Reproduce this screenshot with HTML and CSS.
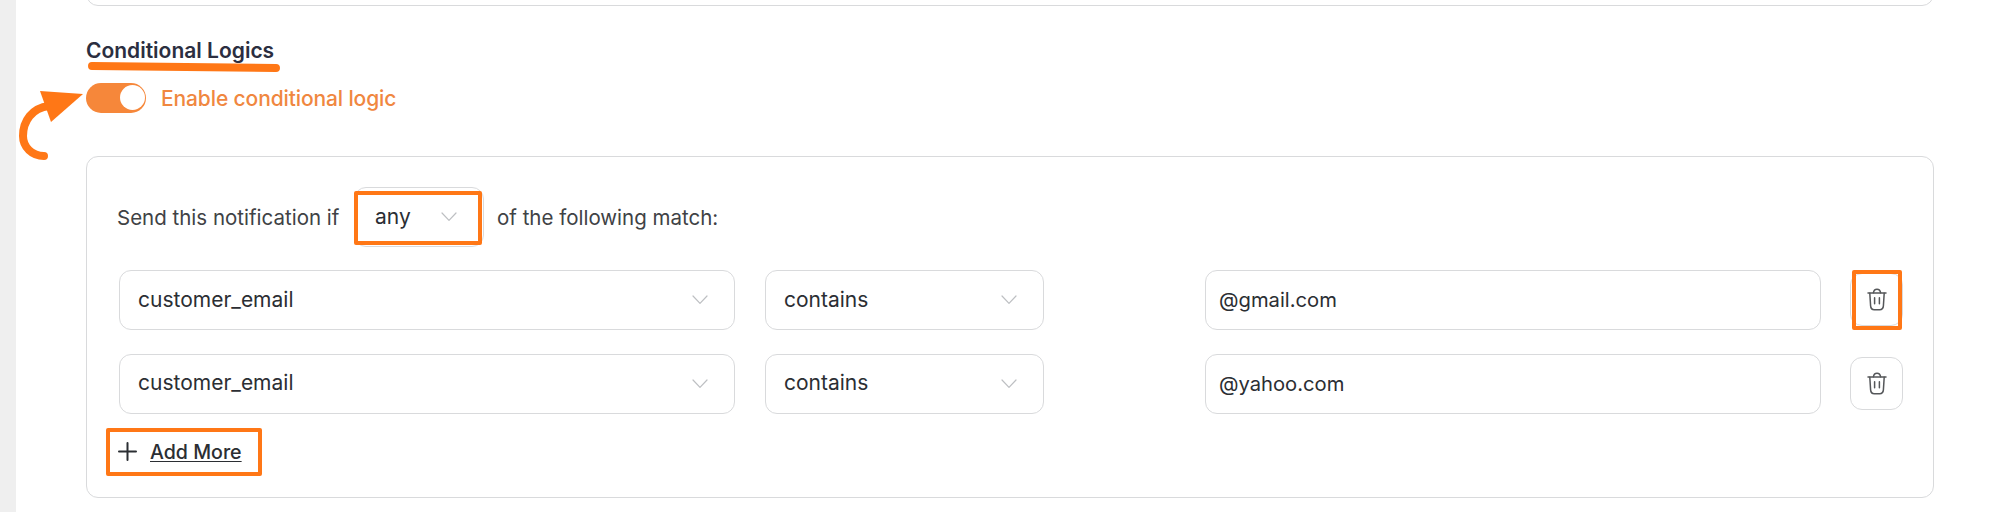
FILE: index.html
```html
<!DOCTYPE html>
<html lang="en">
<head>
<meta charset="utf-8">
<title>Conditional Logics</title>
<link rel="stylesheet" href="styles.css">
</head>
<body>
<svg class="sprite" width="0" height="0" aria-hidden="true">
  <symbol id="chevron" viewBox="0 0 16 10"><path d="M1 1l7 7.3L15 1" fill="none" stroke="currentColor" stroke-width="1.2" stroke-linecap="round" stroke-linejoin="round"/></symbol>
  <symbol id="trash" viewBox="0 0 20 23"><g fill="none" stroke="currentColor" stroke-width="1.5" stroke-linecap="round" stroke-linejoin="round"><path d="M1 5h18"/><path d="M6.4 4.8C6.7 2.4 8 1.2 10 1.2s3.300 1.200 3.600 3.600"/><path d="M2.800 5.200l.8 12.700c.2 2.700 1.200 3.800 3.700 3.800h5.400c2.500 0 3.500-1.100 3.700-3.800l.8-12.700"/><path d="M7.600 9.700v6M12.400 9.700v6"/></g></symbol>
</svg>
<div class="page">
  <aside class="rail"></aside>
  <main class="content">
    <div class="previous-panel"></div>
    <h2 class="title">Conditional Logics
      <svg class="title-mark" width="192" height="12" viewBox="0 0 192 12"><path d="M4 4L188 6" stroke="#ff7716" stroke-width="8" stroke-linecap="round"/></svg>
    </h2>
    <div class="toggle-row">
      <span class="toggle"><span class="knob"></span></span>
      <span class="toggle-label">Enable conditional logic</span>
      <svg class="arrow" width="66" height="72" viewBox="0 0 66 72"><path d="M31 17C14 19 5 32 5 47c0 11 9 20 21 20" fill="none" stroke="#ff7716" stroke-width="8" stroke-linecap="round"/><path d="M22 2l43 3-32 28z" fill="#ff7716"/></svg>
    </div>
    <section class="panel">
      <div class="sentence">
        <span class="before">Send this notification if</span>
        <div class="select any"><span class="any-text">any</span><svg class="chevron"><use href="#chevron"/></svg><i class="mark mark-any"></i></div>
        <span class="after">of the following match:</span>
      </div>
      <div class="rule">
        <div class="select"><span class="field-name">customer_email</span><svg class="chevron"><use href="#chevron"/></svg></div>
        <div class="select"><span class="operator">contains</span><svg class="chevron"><use href="#chevron"/></svg></div>
        <div class="input"><span>@gmail.com</span></div>
        <div class="delete"><svg class="trash"><use href="#trash"/></svg><i class="mark mark-delete"></i></div>
      </div>
      <div class="rule second">
        <div class="select"><span class="field-name">customer_email</span><svg class="chevron"><use href="#chevron"/></svg></div>
        <div class="select"><span class="operator">contains</span><svg class="chevron"><use href="#chevron"/></svg></div>
        <div class="input"><span>@yahoo.com</span></div>
        <div class="delete"><svg class="trash"><use href="#trash"/></svg></div>
      </div>
      <div class="add">
        <svg class="plus" width="19" height="19" viewBox="0 0 19 19"><path d="M9.500 1v17M1 9.500h17" stroke="currentColor" stroke-width="2" stroke-linecap="round"/></svg>
        <span class="add-label">Add More</span>
        <i class="mark mark-add"></i>
      </div>
    </section>
  </main>
</div>
</body>
</html>
```
FILE: styles.css
```css
* { box-sizing: border-box; }
body {
  margin: 0;
  background: #fff;
  color: #2b2e33;
  font: 400 21px/30px Inter, "Liberation Sans", sans-serif;
}
.sprite { position: absolute; }
.page { display: flex; height: 512px; overflow: hidden; }
.rail { flex: none; width: 16px; background: #efefef; }
.content { flex: 1; min-width: 0; padding: 0 56px 0 70px; }
.previous-panel {
  height: 6px;
  position: relative;
  overflow: hidden;
}
.previous-panel::after {
  content: "";
  position: absolute;
  inset: -40px 0 0;
  border: 1px solid #d9dadc;
  border-radius: 12px;
}
.title {
  position: relative;
  margin: 30px 0 0;
  height: 30px;
  font-size: 21px;
  font-weight: 600;
  line-height: 30px;
  color: #2b2e40;
}
.title-mark { position: absolute; left: 2px; top: 26px; }
.toggle-row {
  position: relative;
  display: flex;
  align-items: center;
  gap: 15px;
  height: 30px;
  margin-top: 17px;
}
.toggle {
  display: flex;
  justify-content: flex-end;
  width: 60px;
  height: 30px;
  padding: 2px 1.5px;
  border-radius: 15px;
  background: #f6873a;
}
.knob { width: 25px; height: 25px; border-radius: 50%; background: #fff; }
.toggle-label { padding-top: 2px; font-weight: 500; letter-spacing: -0.12px; color: #f0873f; }
.arrow { position: absolute; left: -68px; top: 6px; }
.panel {
  height: 342px;
  margin-top: 43px;
  padding: 30px 30px 0 32px;
  border: 1px solid #d9dadc;
  border-radius: 12px;
}
.sentence { display: flex; align-items: center; height: 60px; color: #404245; }
.before, .after { padding-top: 1px; font-size: 20.5px; white-space: nowrap; }
.before { width: 236px; margin-left: -2px; }
.any { width: 130px; margin: 0 13px 0 1px; color: #2b2e33; }
.any .any-text { margin-left: 2px; padding-bottom: 1px; }
.select, .input {
  position: relative;
  display: flex;
  align-items: center;
  justify-content: space-between;
  height: 60px;
  padding: 0 26px 0 18px;
  border: 1px solid #d9dadc;
  border-radius: 12px;
}
.input { grid-column: 4; padding: 0 13px 1px; font-size: 20.2px; }
.chevron { width: 16px; height: 10px; color: #bdbfc2; }
.rule {
  display: grid;
  grid-template-columns: 616px 279px 101px 616px 53px;
  column-gap: 30px;
  align-items: start;
  width: 1785px;
  margin-top: 23px;
}
.second { margin-top: 24px; }
.second .field-name, .second .operator { padding-bottom: 2px; }
.delete {
  position: relative;
  grid-column: 5;
  display: grid;
  place-items: center;
  height: 53px;
  margin: 3px 1px 0 -1px;
  border: 1px solid #d9dadc;
  border-radius: 12px;
}
.trash { width: 20px; height: 23px; color: #55575a; }
.add {
  position: relative;
  display: flex;
  align-items: center;
  gap: 13px;
  width: 156px;
  height: 48px;
  margin: 14px 0 0 -13px;
  padding-left: 12px;
  color: #2b2e33;
}
.plus { margin-bottom: 1px; }
.add-label {
  font-weight: 500;
  font-size: 19.6px;
  text-decoration: underline;
  text-decoration-thickness: 1px;
  text-underline-offset: 2px;
}
.mark { position: absolute; border: 4px solid #ff7716; border-radius: 2px; }
.mark-any { left: -1px; top: 3px; width: 128px; height: 54px; }
.mark-delete { left: 1px; top: -4px; width: 50px; height: 60px; }
.mark-add { inset: 0; }
```
